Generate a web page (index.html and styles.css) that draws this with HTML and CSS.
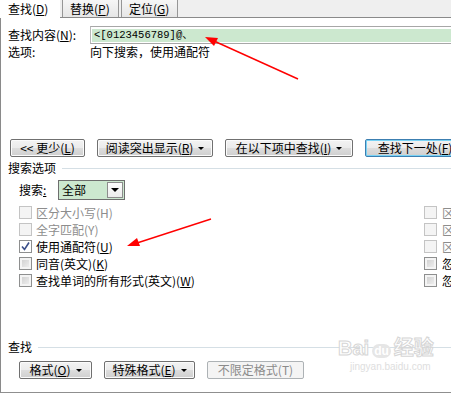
FILE: index.html
```html
<!DOCTYPE html>
<html lang="zh-CN">
  <head>
    <meta charset="UTF-8" />
    <meta name="viewport" content="width=device-width, initial-scale=1.0" />
    <title>查找和替换</title>
    <link rel="stylesheet" href="styles.css">
  </head>
  <body>
    <div class="dialog">
      <div class="tabs">
        <div class="tab active">查找(<u>D</u>)</div>
        <div class="tab">替换(<u>P</u>)</div>
        <div class="tab">定位(<u>G</u>)</div>
      </div>
      <div class="panel">
        <div class="find-row">
          <span class="find-label">查找内容(<u>N</u>):</span>
          <div class="find-input">
            <div class="find-text">&lt;[0123456789]@、</div>
          </div>
        </div>
        <div class="options-row">
          <span class="find-label">选项:</span>
          <span>向下搜索，使用通配符</span>
        </div>

        <div class="button-row top-buttons">
          <button class="btn w-less">&lt;&lt; 更少(<u>L</u>)</button>
          <button class="btn w-read">阅读突出显示(<u>R</u>)<span class="caret"></span></button>
          <button class="btn w-within">在以下项中查找(<u>I</u>)<span class="caret"></span></button>
          <button class="btn btn-default w-next">查找下一处(<u>F</u>)</button>
        </div>

        <div class="group-title">
          <span>搜索选项</span>
          <span class="group-line"></span>
        </div>

        <div class="search-row">
          <span class="search-label">搜索<u>:</u></span>
          <div class="select">
            <span class="select-value">全部</span>
            <span class="select-arrow"></span>
          </div>
        </div>

        <div class="options">
          <div class="opts-left">
            <div class="check-row disabled"><span class="box"></span>区分大小写(H)</div>
            <div class="check-row disabled"><span class="box"></span>全字匹配(Y)</div>
            <div class="check-row">
              <span class="box checked">
                <svg width="11" height="11" viewBox="0 0 11 11"><path d="M2 5.5 L4.5 8.5 L9 1.5" fill="none" stroke="#3b4f8a" stroke-width="1.6"/></svg>
              </span>使用通配符(<u>U</u>)
            </div>
            <div class="check-row"><span class="box"></span>同音(英文)(<u>K</u>)</div>
            <div class="check-row"><span class="box"></span>查找单词的所有形式(英文)(<u>W</u>)</div>
          </div>
          <div class="opts-right">
            <div class="check-row disabled"><span class="box"></span>区分前缀(X)</div>
            <div class="check-row disabled"><span class="box"></span>区分后缀(T)</div>
            <div class="check-row disabled"><span class="box"></span>区分全/半角(M)</div>
            <div class="check-row"><span class="box"></span>忽略标点符号(S)</div>
            <div class="check-row"><span class="box"></span>忽略空格(W)</div>
          </div>
        </div>

        <div class="group-title find-group">
          <span>查找</span>
          <span class="group-line"></span>
        </div>

        <div class="button-row bottom-buttons">
          <button class="btn w-format">格式(<u>O</u>)<span class="caret"></span></button>
          <button class="btn w-special">特殊格式(<u>E</u>)<span class="caret"></span></button>
          <button class="btn w-nofmt" disabled>不限定格式(T)</button>
        </div>
      </div>

      <div class="watermark">
        <div class="wm-top">Bai<span class="wm-paw">du</span>经验</div>
        <div class="wm-url">jingyan.baidu.com</div>
      </div>

      <svg class="arrows" width="451" height="393" viewBox="0 0 451 393">
        <line x1="298" y1="79" x2="214" y2="41" stroke="#f00" stroke-width="1.4"/>
        <polygon points="205,37 218,38 214,46" fill="#f00"/>
        <line x1="211" y1="219" x2="137" y2="243" stroke="#f00" stroke-width="1.4"/>
        <polygon points="127,246 137,238 140,246" fill="#f00"/>
      </svg>
    </div>
  </body>
</html>
```

FILE: styles.css
```css
* {
  box-sizing: border-box;
}
body {
  margin: 0;
  width: 451px;
  height: 393px;
  overflow: hidden;
  background-color: #ffffff;
  color: #000000;
  font-family: "Noto Sans CJK SC", "Noto Sans", sans-serif;
  font-size: 12px;
  line-height: 14px;
}
u {
  text-decoration: underline;
  text-underline-offset: 1px;
}
.dialog {
  position: relative;
  width: 560px;
  height: 393px;
}

/* tabs */
.tabs {
  display: flex;
  align-items: flex-start;
  gap: 2px;
  height: 18px;
  background-color: #efefef;
  border-bottom: 1px solid #8a8a8a;
}
.tab {
  height: 17px;
  width: 57px;
  padding: 1px 0 0 7px;
  background: linear-gradient(#f6f6f6, #e6e6e6);
  border: 1px solid #969696;
  border-top: none;
  border-bottom: none;
  line-height: 15px;
}
.tab.active {
  width: 60px;
  height: 18px;
  margin-bottom: -1px;
  padding-left: 8px;
  background: #ffffff;
  border: none;
}

/* main panel */
.panel {
  height: 375px;
  padding: 8px 0 0 7px;
  border-left: 1px solid #8a8a8a;
  border-bottom: 1px solid #8f8f8f;
}
.find-row {
  display: flex;
  align-items: center;
  height: 18px;
}
.find-label {
  width: 82px;
  flex-shrink: 0;
}
.find-input {
  flex: 1;
  height: 18px;
  padding: 2px 0 1px 1px;
  border-top: 1px solid #a7a7a7;
  border-bottom: 1px solid #a7a7a7;
  border-left: 1px solid #b8b8b8;
}
.find-text {
  height: 13px;
  padding-left: 2px;
  background-color: #cce8cf;
  font-family: "Liberation Mono", "Noto Sans CJK SC", monospace;
  font-size: 10.5px;
  line-height: 13px;
}
.options-row {
  display: flex;
  align-items: center;
  height: 14px;
  margin-top: 1px;
}

/* buttons */
.button-row {
  display: flex;
  gap: 12px;
}
.top-buttons {
  margin-top: 80px;
  padding-left: 2px;
}
.bottom-buttons {
  margin-top: 7px;
  padding-left: 11px;
}
.btn {
  display: flex;
  align-items: center;
  justify-content: center;
  height: 18px;
  padding: 0;
  flex-shrink: 0;
  border: 1px solid #707070;
  border-radius: 2px;
  background: linear-gradient(#f3f3f3 0%, #ebebeb 50%, #dddddd 51%, #cfcfcf 100%);
  box-shadow: inset 0 0 0 1px #fbfbfb;
  font-family: inherit;
  font-size: 12px;
  line-height: 14px;
  color: #000000;
  white-space: nowrap;
}
.btn-default {
  border-color: #3c7fb1;
  box-shadow: inset 0 0 0 1px #79d3f5;
}
.btn:disabled {
  border-color: #adb2b5;
  background: #f4f4f4;
  box-shadow: none;
  color: #8b8b8b;
}
.caret {
  display: inline-block;
  margin-left: 5px;
  border-left: 3px solid transparent;
  border-right: 3px solid transparent;
  border-top: 3px solid #000000;
}
.w-less { width: 75px; }
.w-read { width: 116px; }
.w-within { width: 128px; }
.w-next { width: 100px; }
.w-format { width: 73px; }
.w-special { width: 91px; }
.w-nofmt { width: 97px; }

/* groups */
.group-title {
  display: flex;
  align-items: center;
  height: 14px;
  margin-top: 4px;
}
.group-line {
  flex: 1;
  height: 1px;
  margin-left: 6px;
  background-color: #d5dfe5;
}
.find-group {
  margin-top: 49px;
}

.search-row {
  display: flex;
  align-items: center;
  height: 20px;
  margin-top: 5px;
  padding-left: 11px;
}
.search-label {
  width: 39px;
}
.select {
  display: flex;
  align-items: center;
  justify-content: space-between;
  width: 67px;
  height: 20px;
  padding: 1px 1px 1px 3px;
  border: 1px solid #6e6e6e;
  background-color: #cce8cf;
}
.select-arrow {
  position: relative;
  width: 16px;
  height: 16px;
  border: 1px solid #8c8c8c;
  background: linear-gradient(#fdfdfd, #ececec);
}
.select-arrow::after {
  content: "";
  position: absolute;
  left: 3px;
  top: 5px;
  border-left: 4px solid transparent;
  border-right: 4px solid transparent;
  border-top: 4px solid #000000;
}

/* check boxes */
.options {
  display: flex;
  margin-top: 6px;
  padding-left: 11px;
}
.opts-left {
  width: 405px;
  flex-shrink: 0;
}
.opts-right {
  flex-shrink: 0;
  white-space: nowrap;
}
.check-row {
  display: flex;
  align-items: flex-start;
  height: 17px;
  white-space: nowrap;
}
.check-row .box {
  display: flex;
  align-items: center;
  justify-content: center;
  flex-shrink: 0;
  width: 13px;
  height: 13px;
  margin-right: 4px;
  border: 1px solid #8e8f8f;
  background: linear-gradient(135deg, #cbcbcb, #f4f4f4);
  box-shadow: inset 0 0 0 2px #f4f4f4;
}
.check-row .box.checked {
  background: #ffffff;
  box-shadow: none;
}
.check-row.disabled {
  color: #8d8d8d;
}
.check-row.disabled .box {
  border-color: #c4c4c4;
  background: #f4f4f4;
  box-shadow: none;
}
.opts-right .box {
  margin-right: 5px;
}

/* overlay marks */
.watermark {
  position: absolute;
  left: 338px;
  top: 336px;
  color: #ffffff;
  -webkit-text-stroke: 1px #d6d6d6;
  font-family: "Liberation Sans", "Noto Sans CJK SC", sans-serif;
  pointer-events: none;
}
.wm-top {
  font-size: 20px;
  line-height: 24px;
  font-weight: bold;
}
.wm-paw {
  display: inline-block;
  margin: 0 3px;
  padding: 0 2px;
  border-radius: 8px;
  background-color: #e6e6e6;
  font-size: 12px;
  line-height: 14px;
  -webkit-text-stroke: 0;
}
.wm-url {
  margin-left: 12px;
  color: #dedede;
  -webkit-text-stroke: 0;
  font-size: 10px;
  line-height: 14px;
}
.arrows {
  position: absolute;
  left: 0;
  top: 0;
  pointer-events: none;
}
```
